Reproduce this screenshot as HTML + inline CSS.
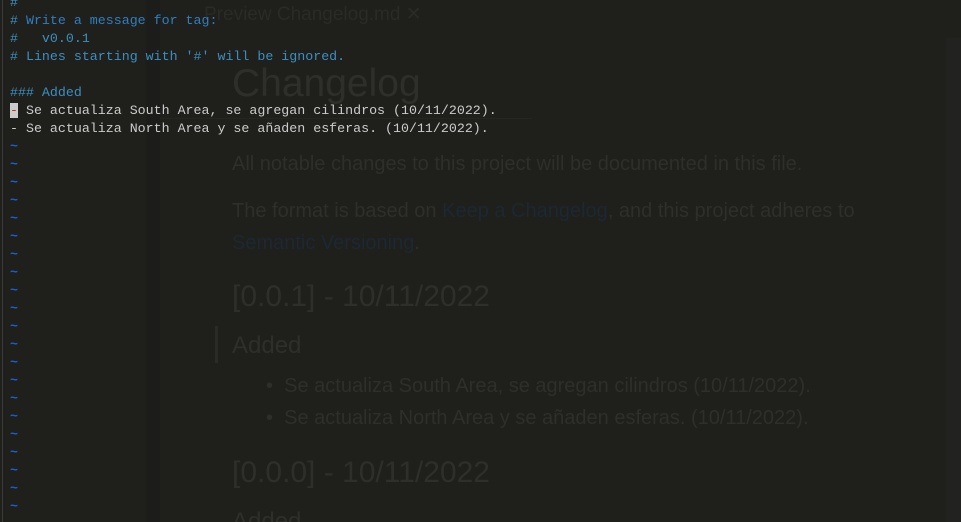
<!DOCTYPE html>
<html><head><meta charset="utf-8"><style>
html,body{margin:0;padding:0;width:961px;height:522px;overflow:hidden;background:#1f1f1c;}
.bg{position:absolute;left:0;top:0;width:961px;height:522px;overflow:hidden;}
.p{position:absolute;font-family:"Liberation Sans",sans-serif;color:#2e2e2a;white-space:nowrap;}
.l{color:#1c2832}
.t{position:absolute;left:10px;font-family:"Liberation Mono",monospace;font-size:13.3px;line-height:18px;white-space:pre;}
.b{color:#2f7fc0}.c{color:#3b8fc0}.w{color:#cccccc}.tl{color:#1a5fd0;font-weight:bold}
</style></head><body>
<div class="bg">
<div style="position:absolute;left:146px;top:0;width:14px;height:522px;background:#1c1c1a"></div>
<div style="position:absolute;left:160px;top:118px;width:372px;height:1px;background:#252522"></div>
<div style="position:absolute;left:946px;top:38px;width:15px;height:484px;background:#222220"></div>
<div style="position:absolute;left:215px;top:326px;width:3px;height:37px;background:#2a2a27"></div>
<div style="position:absolute;left:2px;top:0;width:1px;height:522px;background:#3a3a38"></div>
<div class="p" style="left:204px;top:3px;font-size:19px;color:#2a2a27">Preview Changelog.md ✕</div>
<div class="p" style="left:232px;top:62px;font-size:39px;">Changelog</div>
<div class="p" style="left:232px;top:153px;font-size:20px;">All notable changes to this project will be documented in this file.</div>
<div class="p" style="left:232px;top:200px;font-size:20px;">The format is based on <span class="l">Keep a Changelog</span>, and this project adheres to</div>
<div class="p" style="left:232px;top:232px;font-size:20px;"><span class="l">Semantic Versioning</span>.</div>
<div class="p" style="left:232px;top:280px;font-size:30px;">[0.0.1] - 10/11/2022</div>
<div class="p" style="left:232px;top:332px;font-size:24px;">Added</div>
<div class="p" style="left:266px;top:375px;font-size:20px;">•&nbsp;&nbsp;Se actualiza South Area, se agregan cilindros (10/11/2022).</div>
<div class="p" style="left:266px;top:407px;font-size:20px;">•&nbsp;&nbsp;Se actualiza North Area y se añaden esferas. (10/11/2022).</div>
<div class="p" style="left:232px;top:456px;font-size:30px;">[0.0.0] - 10/11/2022</div>
<div class="p" style="left:232px;top:508px;font-size:24px;">Added</div>
</div>
<div class="t" style="top:-6px"><span class="c">#</span>
<span class="c"># </span><span class="b">Write a message for tag:</span>
<span class="c">#   v0.0.1</span>
<span class="c"># Lines starting with '#' will be ignored.</span>

<span class="c">### Added</span>
<span style="background:#cccccc;color:#c03030">-</span><span class="w"> Se actualiza South Area, se agregan cilindros (10/11/2022).</span>
<span class="w">- Se actualiza North Area y se añaden esferas. (10/11/2022).</span>
<span class="tl">~
~
~
~
~
~
~
~
~
~
~
~
~
~
~
~
~
~
~
~
~</span></div>
</body></html>
